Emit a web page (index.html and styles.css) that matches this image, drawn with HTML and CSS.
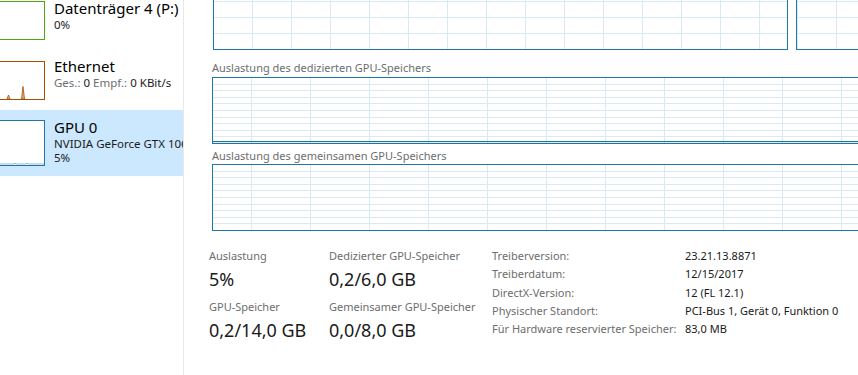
FILE: index.html
```html
<!DOCTYPE html>
<html lang="de">
<head>
<meta charset="utf-8">
<title>Task-Manager GPU</title>
<link rel="stylesheet" href="styles.css">
</head>
<body>
<div class="app">
  <aside class="sidebar">
    <div class="list">
      <div class="item item-disk">
        <div class="thumb thumb-disk"></div>
        <div class="info">
          <div class="title">Datenträger 4 (P:)</div>
          <div class="sub">0%</div>
        </div>
      </div>
      <div class="item item-eth">
        <div class="thumb thumb-eth">
          <svg class="spark" viewBox="0 0 58 37" preserveAspectRatio="none">
            <polygon points="21,37 22.5,33 24,37" fill="rgba(167,79,1,0.35)" stroke="#a74f01" stroke-width="0.8"/>
            <polygon points="35.5,37 37,24.5 38.5,37" fill="rgba(167,79,1,0.45)" stroke="#a74f01" stroke-width="0.8"/>
          </svg>
        </div>
        <div class="info">
          <div class="title">Ethernet</div>
          <div class="sub"><span class="muted">Ges.:</span> 0 <span class="muted">Empf.:</span> 0 KBit/s</div>
        </div>
      </div>
      <div class="item item-gpu selected">
        <div class="thumb thumb-gpu">
          <svg class="spark" viewBox="0 0 58 44" preserveAspectRatio="none">
            <polyline points="0,43 10,43 11,42 12,43 28,43 29,42 30,43 40,43 41,42 42,43 58,43" fill="none" stroke="#8fbcd9" stroke-width="1"/>
          </svg>
        </div>
        <div class="info">
          <div class="title">GPU 0</div>
          <div class="sub">NVIDIA GeForce GTX 1060 6GB</div>
          <div class="sub">5%</div>
        </div>
      </div>
    </div>
  </aside>
  <main class="main">
    <div class="main-inner">
      <div class="engines">
        <div class="chart engine"></div>
        <div class="chart engine engine-right"></div>
      </div>
      <div class="chart-label label-ded">Auslastung des dedizierten GPU-Speichers</div>
      <div class="chart mem"><div class="mem-fill"></div></div>
      <div class="chart-label label-shared">Auslastung des gemeinsamen GPU-Speichers</div>
      <div class="chart mem"></div>
      <div class="stats">
        <div class="stat-col col-1">
          <div class="stat">
            <div class="stat-label">Auslastung</div>
            <div class="stat-value">5%</div>
          </div>
          <div class="stat">
            <div class="stat-label">GPU-Speicher</div>
            <div class="stat-value">0,2/14,0 GB</div>
          </div>
        </div>
        <div class="stat-col col-2">
          <div class="stat">
            <div class="stat-label">Dedizierter GPU-Speicher</div>
            <div class="stat-value">0,2/6,0 GB</div>
          </div>
          <div class="stat">
            <div class="stat-label">Gemeinsamer GPU-Speicher</div>
            <div class="stat-value">0,0/8,0 GB</div>
          </div>
        </div>
        <div class="props">
          <div class="prop-label">Treiberversion:</div><div class="prop-value">23.21.13.8871</div>
          <div class="prop-label">Treiberdatum:</div><div class="prop-value">12/15/2017</div>
          <div class="prop-label">DirectX-Version:</div><div class="prop-value">12 (FL 12.1)</div>
          <div class="prop-label">Physischer Standort:</div><div class="prop-value">PCI-Bus 1, Gerät 0, Funktion 0</div>
          <div class="prop-label">Für Hardware reservierter Speicher:</div><div class="prop-value">83,0 MB</div>
        </div>
      </div>
    </div>
  </main>
</div>
</body>
</html>
```

FILE: styles.css
```css
* { box-sizing: border-box; }

html, body {
  margin: 0;
  padding: 0;
}

body {
  width: 858px;
  height: 375px;
  overflow: hidden;
  background: #ffffff;
  font-family: "Noto Sans", "Open Sans", sans-serif;
  color: #1a1a1a;
}

.app {
  display: flex;
  height: 375px;
}

/* ---------- sidebar ---------- */
.sidebar {
  flex: 0 0 184px;
  border-right: 1px solid #e8e8e8;
  overflow: hidden;
}

.list {
  display: flex;
  flex-direction: column;
  margin-top: -22px;
}

.item {
  display: flex;
  align-items: flex-start;
  height: 66px;
}

.item.selected {
  background: #cce8ff;
}

.thumb {
  flex: 0 0 60px;
  margin-left: -15px;
  border: 1px solid;
  background: #ffffff;
}

.spark {
  display: block;
  width: 100%;
  height: 100%;
}

.thumb-disk {
  margin-top: 23px;
  height: 39px;
  border-color: #4da60c;
}

.thumb-eth {
  margin-top: 17px;
  height: 39px;
  border-color: #a74f01;
}

.thumb-gpu {
  margin-top: 10px;
  height: 46px;
  border-color: #1f76a9;
}

.info {
  flex: 1;
  min-width: 0;
  margin-left: 9px;
  white-space: nowrap;
  overflow: hidden;
}

.item-disk .info { padding-top: 21px; }
.item-eth .info { padding-top: 13px; }
.item-gpu .info { padding-top: 8px; }

.title {
  font-size: 15px;
  line-height: 19px;
  color: #000000;
}

.sub {
  font-size: 11.5px;
  line-height: 14px;
  color: #1a1a1a;
}

.muted {
  color: #6d6d6d;
}

/* ---------- main ---------- */
.main {
  flex: 1;
  min-width: 0;
  overflow: hidden;
  padding-left: 28px;
}

.main-inner {
  width: 1160px;
}

.engines {
  display: grid;
  grid-template-columns: 575px 575px;
  column-gap: 8px;
  margin-top: -60px;
  margin-left: 1px;
}

.chart {
  border: 1px solid #1f76a9;
  background-color: #ffffff;
}

.engine {
  height: 110px;
  background-image:
    linear-gradient(to right, #d9eaf4 1px, transparent 1px),
    linear-gradient(to bottom, #d9eaf4 1px, transparent 1px);
  background-size: 39px 100%, 100% 16px;
  background-position: 38px 0, 0 bottom;
}

.engine-right {
  background-position: 39px 0, 0 bottom;
}

.chart-label {
  font-size: 11px;
  line-height: 15px;
  color: #6d6d6d;
  white-space: nowrap;
}

.label-ded {
  padding-top: 10px;
  padding-bottom: 2px;
}

.label-shared {
  padding-top: 4px;
  padding-bottom: 1px;
}

.mem {
  height: 67px;
  display: flex;
  flex-direction: column;
  justify-content: flex-end;
  background-image:
    linear-gradient(to right, #d9eaf4 1px, transparent 1px),
    repeating-linear-gradient(to bottom, transparent 0, transparent 5.6px, #dce9f3 5.6px, #dce9f3 6.6px);
  background-size: 59px 100%, 100% 100%;
  background-position: 38px 0, 0 0;
  background-repeat: repeat, no-repeat;
}

.mem-fill {
  height: 2px;
  border-top: 1px solid #1f76a9;
  background: rgba(31, 118, 169, 0.15);
}

/* ---------- stats ---------- */
.stats {
  display: flex;
  align-items: flex-start;
  margin-left: -3px;
  padding-top: 17px;
}

.col-1 { flex: 0 0 120px; }
.col-2 { flex: 0 0 163px; }

.stat + .stat {
  margin-top: 9px;
}

.stat-label {
  font-size: 11px;
  line-height: 15px;
  color: #6d6d6d;
  white-space: nowrap;
}

.stat-value {
  margin-top: 5px;
  font-size: 18px;
  line-height: 22px;
  color: #1a1a1a;
  white-space: nowrap;
}

.props {
  display: grid;
  grid-template-columns: 193px auto;
  margin-top: -1px;
  font-size: 11px;
  line-height: 18.3px;
  white-space: nowrap;
}

.prop-label {
  color: #6d6d6d;
}

.prop-value {
  color: #1a1a1a;
}
```
